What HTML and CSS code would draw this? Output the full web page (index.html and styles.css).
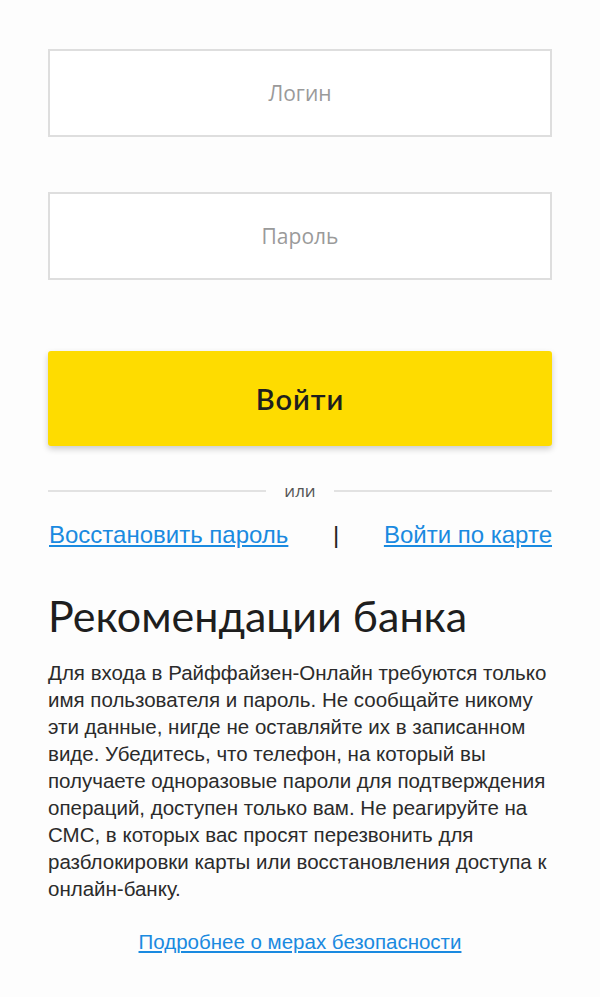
FILE: index.html
```html
<!DOCTYPE html>
<html lang="ru">
<head>
<meta charset="utf-8">
<link rel="stylesheet" href="styles.css">
</head>
<body>
<main class="page">
  <form class="login">
    <div class="field"><input class="input" type="text" placeholder="Логин"></div>
    <div class="field"><input class="input" type="password" placeholder="Пароль"></div>
    <button class="btn" type="button">Войти</button>
    <div class="divider"><span class="line"></span><span class="or">или</span><span class="line"></span></div>
    <div class="links">
      <a class="link" href="#">Восстановить пароль</a>
      <span class="sep">|</span>
      <a class="link" href="#">Войти по карте</a>
    </div>
  </form>
  <section class="rec">
    <h2 class="rec-title">Рекомендации банка</h2>
    <p class="rec-text">Для входа в Райффайзен-Онлайн требуются только имя пользователя и пароль. Не сообщайте никому эти данные, нигде не оставляйте их в записанном виде. Убедитесь, что телефон, на который вы получаете одноразовые пароли для подтверждения операций, доступен только вам. Не реагируйте на СМС, в которых вас просят перезвонить для разблокировки карты или восстановления доступа к онлайн-банку.</p>
    <div class="more"><a class="link small" href="#">Подробнее о мерах безопасности</a></div>
  </section>
</main>
</body>
</html>
```

FILE: styles.css
```css
html, body {
  margin: 0;
  padding: 0;
  background: #fdfdfd;
}
.page {
  width: 504px;
  margin: 0 auto;
  padding: 49px 0 0 0;
  font-family: "Liberation Sans", Arial, sans-serif;
}
.login {
  display: flex;
  flex-direction: column;
}
.field {
  margin-bottom: 55px;
}
.input {
  box-sizing: border-box;
  width: 100%;
  height: 88px;
  border: 2px solid #dedede;
  background: #fff;
  text-align: center;
  font-family: "Open Sans", "Noto Sans", sans-serif;
  font-size: 21px;
  color: #333;
  outline: none;
  padding: 0;
  display: block;
}
.input::placeholder {
  color: #9a9a9a;
}
.btn {
  margin-top: 16px;
  height: 95px;
  border: 0;
  border-radius: 3px;
  background: #fedc00;
  box-shadow: 0 3px 6px rgba(0,0,0,0.2);
  font-family: "Lato", "Noto Sans", sans-serif;
  font-weight: 600;
  font-size: 29px;
  letter-spacing: 1px;
  color: #1e1e1e;
  cursor: pointer;
}
.divider {
  margin-top: 33px;
  display: flex;
  align-items: center;
  gap: 18px;
}
.line {
  flex: 1;
  height: 2px;
  background: #e2e2e2;
}
.or {
  font-family: "Open Sans", "Noto Sans", sans-serif;
  font-size: 17px;
  color: #555;
  line-height: 24px;
}
.links {
  margin-top: 17px;
  display: flex;
  justify-content: space-between;
  align-items: center;
  font-family: "Liberation Sans", Arial, sans-serif;
  font-size: 24px;
  line-height: 30px;
}
.link {
  color: #1a8ae0;
  text-decoration: underline;
}
.links .link:first-child {
  margin-left: 1px;
}
.sep {
  color: #222;
  margin-left: 0;
}
.rec {
  margin-top: 38px;
}
.rec-title {
  margin: 0;
  font-family: "Lato", "Noto Sans", sans-serif;
  font-weight: 400;
  font-size: 43px;
  line-height: 56px;
  color: #1e1e1e;
}
.rec-text {
  margin: 15px 0 0 0;
  font-family: "Liberation Sans", Arial, sans-serif;
  font-size: 20.5px;
  line-height: 27px;
  color: #2b2b2b;
}
.more {
  margin-top: 28px;
  text-align: center;
}
.link.small {
  font-family: "Liberation Sans", Arial, sans-serif;
  font-size: 20.5px;
}
```
